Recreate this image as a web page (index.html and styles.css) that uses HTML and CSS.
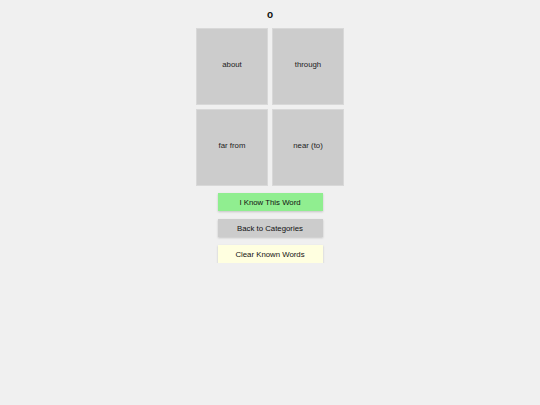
FILE: index.html
```html
<!DOCTYPE html>
<html>
<head>
<meta charset="utf-8">
<link rel="stylesheet" href="styles.css">
</head>
<body>
<div class="app">
  <h1 class="word">o</h1>
  <div class="grid">
    <div class="tile">about</div>
    <div class="tile">through</div>
    <div class="tile">far from</div>
    <div class="tile">near (to)</div>
  </div>
  <div class="actions">
    <button class="btn btn-known">I Know This Word</button>
    <button class="btn btn-back">Back to Categories</button>
    <button class="btn btn-clear">Clear Known Words</button>
  </div>
</div>
</body>
</html>
```
FILE: styles.css
```css
html, body {
  margin: 0;
  padding: 0;
  background: #f0f0f0;
  font-family: "Liberation Sans", Arial, sans-serif;
  color: #222;
}
.app {
  display: flex;
  flex-direction: column;
  align-items: center;
  padding-top: 9px;
}
.word {
  margin: 0;
  font-size: 10px;
  font-weight: bold;
  line-height: 12px;
  height: 12px;
  color: #111;
}
.grid {
  margin-top: 7px;
  display: grid;
  grid-template-columns: 72px 72px;
  grid-auto-rows: 77px;
  gap: 4px;
}
.tile {
  box-sizing: border-box;
  background: #cccccc;
  border: 1px solid #d8d8d8;
  padding-bottom: 5px;
  display: flex;
  align-items: center;
  justify-content: center;
  font-size: 7.8px;
  color: #222;
}
.actions {
  margin-top: 7px;
  display: flex;
  flex-direction: column;
  align-items: center;
  gap: 8px;
}
.btn {
  box-sizing: border-box;
  width: 105px;
  height: 18px;
  border: none;
  padding: 0;
  font-family: "Liberation Sans", Arial, sans-serif;
  font-size: 7.8px;
  color: #111;
  box-shadow: 0 1px 2px rgba(0, 0, 0, 0.18);
}
.btn-known { background: #90ee90; }
.btn-back { background: #cccccc; }
.btn-clear { background: #ffffe0; }
```
